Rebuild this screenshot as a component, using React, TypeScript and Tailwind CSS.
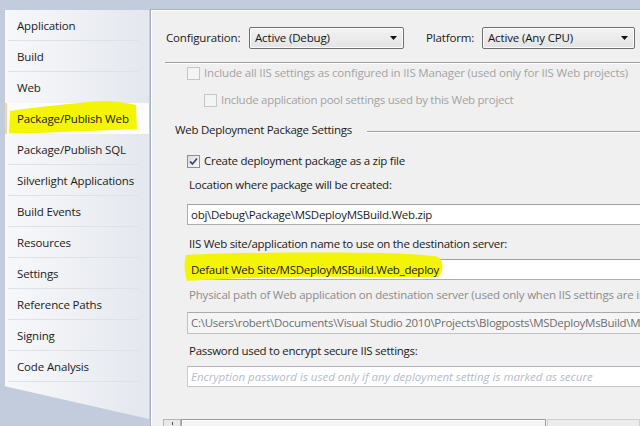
import React from "react";

const font = { fontFamily: '"Open Sans", "Noto Sans", sans-serif' };

const tabs = [
  "Application",
  "Build",
  "Web",
  "Package/Publish Web",
  "Package/Publish SQL",
  "Silverlight Applications",
  "Build Events",
  "Resources",
  "Settings",
  "Reference Paths",
  "Signing",
  "Code Analysis",
];

function Checkbox({ checked, disabled }: { checked?: boolean; disabled?: boolean }) {
  return (
    <div
      className={
        "w-[13px] h-[13px] shrink-0 border flex items-center justify-center " +
        (disabled
          ? "border-[#c6c6c6] bg-[#f4f4f4]"
          : "border-[#8e8f8f] bg-gradient-to-br from-[#dcdcdc] to-[#fbfbfb]")
      }
    >
      {checked && (
        <svg width="9" height="9" viewBox="0 0 9 9">
          <path d="M1 4.5 L3.5 7 L8 1.5" fill="none" stroke="#3d4e85" strokeWidth="1.8" />
        </svg>
      )}
    </div>
  );
}

function Dropdown({ value, w }: { value: string; w: string }) {
  return (
    <div
      className={
        w +
        " h-[22px] rounded-[2px] border border-[#707070] bg-gradient-to-b from-[#f3f3f3] to-[#e3e3e3] flex items-center pl-[5px] pr-[6px] shadow-[inset_0_0_0_1px_#fcfcfc]"
      }
    >
      <span className="flex-1 text-[11.5px] text-[#141414]">{value}</span>
      <svg width="7" height="4" viewBox="0 0 7 4">
        <path d="M0 0 H7 L3.5 4 Z" fill="#111" />
      </svg>
    </div>
  );
}

export default function App() {
  return (
    <div
      className="w-[640px] h-[426px] overflow-hidden bg-[#c2ccdc] flex pt-[9px] text-[11.5px] text-[#1b1b1b] tracking-[-0.15px]"
      style={font}
    >
      {/* sidebar */}
      <div className="w-[150px] shrink-0 pl-[5px] pt-[1px]">
        <div className="w-[144px] h-[409px] bg-gradient-to-r from-[#f7f8fa] via-[#eef0f4] to-[#e3e7ee] [clip-path:polygon(0_0,100%_0,100%_100%,0_92%)] flex flex-col">
          {tabs.map((t, i) => {
            const sel = i === 3;
            return (
              <div
                key={t}
                className={
                  "relative h-[31px] shrink-0 flex items-center " +
                  (sel ? "bg-[#fcfcfc] border-l-2 border-[#f6d79a]" : "")
                }
              >
                {sel && (
                  <svg
                    className="absolute left-[1px] top-[-4px]"
                    width="129"
                    height="35"
                    viewBox="0 0 129 35"
                  >
                    <path
                      d="M2 12 C20 9 50 6 80 3 C95 1 110 2 128 6 L129 30 C100 31 60 33 30 34 L1 34 Z"
                      fill="#f4f406"
                    />
                  </svg>
                )}
                <span className={"relative " + (sel ? "pl-[10px]" : "pl-[12px]")}>{t}</span>
                {!sel && i !== 2 && (
                  <div className="absolute left-[3px] right-[10px] bottom-0 h-px bg-[#dde1e8]" />
                )}
              </div>
            );
          })}
        </div>
      </div>

      {/* content */}
      <div className="flex-1 bg-[#f0f0f0] border-l border-t border-[#a9b2c1] shadow-[inset_1px_1px_0_#ffffff] flex flex-col overflow-hidden tracking-[-0.27px] *:shrink-0">
        {/* config row */}
        <div className="mt-[17px] h-[22px] flex items-center tracking-[-0.15px]">
          <span className="ml-[15px] w-[83px]">Configuration:</span>
          <Dropdown value="Active (Debug)" w="w-[155px]" />
          <span className="ml-[22px] w-[56px]">Platform:</span>
          <Dropdown value="Active (Any CPU)" w="w-[153px]" />
        </div>

        <div className="ml-[14px] mt-[13px] h-[2px] border-t border-[#a0a0a0] border-b border-b-white" />

        <div className="mt-[1px] h-[16px] ml-[36px] flex items-center gap-[4px] text-[#a3a3a3] whitespace-nowrap tracking-[-0.17px]">
          <Checkbox disabled />
          <span>Include all IIS settings as configured in IIS Manager (used only for IIS Web projects)</span>
        </div>
        <div className="mt-[11px] h-[16px] ml-[53px] flex items-center gap-[4px] text-[#a3a3a3] whitespace-nowrap">
          <Checkbox disabled />
          <span>Include application pool settings used by this Web project</span>
        </div>

        <div className="mt-[14px] h-[16px] ml-[24px] flex items-center">
          <span className="whitespace-nowrap">Web Deployment Package Settings</span>
          <div className="flex-1 ml-[15px] mt-[3px] h-[2px] border-t border-[#a0a0a0] border-b border-b-white" />
        </div>

        <div className="mt-[15px] h-[16px] ml-[36px] flex items-center gap-[4px] whitespace-nowrap">
          <Checkbox checked />
          <span>Create deployment package as a zip file</span>
        </div>

        <div className="mt-[8px] h-[16px] ml-[38px] flex items-center whitespace-nowrap">
          Location where package will be created:
        </div>
        <div className="mt-[11px] ml-[36px] w-[480px] h-[21px] bg-white border border-[#abadb3] border-t-[#9ea1a8] border-r-0 flex items-center pl-[3px] whitespace-nowrap">
          obj\Debug\Package\MSDeployMSBuild.Web.zip
        </div>

        <div className="mt-[11px] h-[16px] ml-[38px] flex items-center whitespace-nowrap">
          IIS Web site/application name to use on the destination server:
        </div>
        <div className="relative mt-[7px] ml-[36px] w-[480px] h-[21px] bg-white border border-[#abadb3] border-t-[#9ea1a8] border-r-0 flex items-center pl-[3px] whitespace-nowrap">
          <svg
            className="absolute left-[-5px] top-[-8px]"
            width="262"
            height="30"
            viewBox="0 0 262 30"
          >
            <path
              d="M3 3 C60 0 150 0 200 1 C228 2 248 3 255 5 C261 8 261 20 255 25 C220 26 150 24 100 25 C60 26 20 28 4 29 C1 20 1 10 3 3 Z"
              fill="#f4f406"
            />
          </svg>
          <span className="relative">Default Web Site/MSDeployMSBuild.Web_deploy</span>
        </div>

        <div className="mt-[7px] h-[16px] ml-[38px] flex items-center whitespace-nowrap text-[#8c8c8c] tracking-[-0.2px]">
          Physical path of Web application on destination server (used only when IIS settings are imported)
        </div>
        <div className="mt-[9px] ml-[36px] w-[480px] h-[22px] bg-[#f5f5f5] border border-[#c0c2c6] border-t-[#a8aab0] border-r-0 flex items-center pl-[3px] whitespace-nowrap text-[#6e6e6e]">
          C:\Users\robert\Documents\Visual Studio 2010\Projects\Blogposts\MSDeployMsBuild\MSDeployMSBuild.Web
        </div>

        <div className="mt-[9px] h-[16px] ml-[38px] flex items-center whitespace-nowrap">
          Password used to encrypt secure IIS settings:
        </div>
        <div className="mt-[7px] ml-[36px] w-[480px] h-[21px] bg-white border border-[#c6c9d0] border-t-[#b3b6bd] border-r-0 flex items-center pl-[3px] whitespace-nowrap italic text-[#b4bccc] tracking-[0px]">
          Encryption password is used only if any deployment setting is marked as secure
        </div>

        {/* bottom scrollbar */}
        <div className="mt-[32px] ml-[12px] flex h-[12px]">
          <div className="w-[18px] border border-[#b5b5b5] bg-[#e8e8e8] flex justify-center pt-[2px]">
            <div className="w-px h-[3px] bg-[#555]" />
          </div>
          <div className="w-[365px] border border-[#9c9c9c] bg-[#f4f4f4] shadow-[inset_1px_1px_0_#ffffff]" />
          <div className="flex-1 ml-[1px] border border-[#cfcfcf] bg-[#ececec]" />
        </div>
      </div>
    </div>
  );
}
